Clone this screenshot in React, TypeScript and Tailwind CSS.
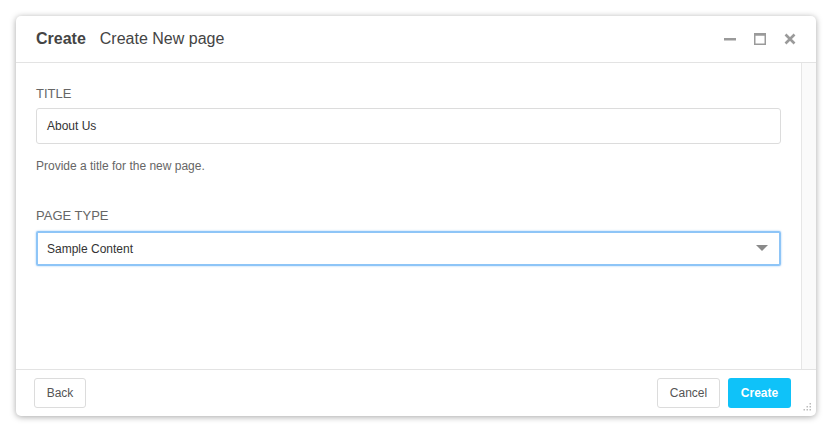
import React from 'react';

export default function App() {
  return (
    <div className="w-[830px] h-[430px] bg-white p-4 font-['Liberation_Sans',Arial,sans-serif]">
      <div className="w-[800px] h-[400px] bg-white rounded-[5px] shadow-[0_1px_6px_rgba(0,0,0,0.35)] flex flex-col overflow-hidden">
        {/* Header */}
        <div className="h-[47px] border-b border-[#e3e3e3] flex items-center pl-5 pr-5 shrink-0">
          <span className="text-[16px] font-bold text-[#444]">Create</span>
          <span className="text-[16px] text-[#444] ml-[14px]">Create New page</span>
          <div className="ml-auto flex items-center gap-[18px] pr-0">
            <svg width="12" height="12" viewBox="0 0 12 12">
              <rect x="0" y="5" width="12" height="2.5" fill="#9a9a9a" />
            </svg>
            <svg width="12" height="12" viewBox="0 0 12 12">
              <rect x="0.75" y="0.75" width="10.5" height="10.5" fill="none" stroke="#9a9a9a" strokeWidth="1.5" />
              <rect x="0.75" y="0.75" width="10.5" height="2" fill="#9a9a9a" />
            </svg>
            <svg width="12" height="12" viewBox="0 0 12 12">
              <path d="M1.5 1.5 L10.5 10.5 M10.5 1.5 L1.5 10.5" stroke="#9a9a9a" strokeWidth="2.6" />
            </svg>
          </div>
        </div>

        {/* Body */}
        <div className="flex-1 flex min-h-0">
          <div className="flex-1 pl-5 pr-5 pt-[23px]">
            <div className="text-[13px] leading-4 text-[#666] mb-[6px]">TITLE</div>
            <div className="h-[36px] border border-[#dcdcdc] rounded-[3px] flex items-center px-[10px] text-[12px] text-[#333]">
              About Us
            </div>
            <div className="text-[12px] leading-4 text-[#666] mt-[14px]">Provide a title for the new page.</div>
            <div className="text-[13px] leading-4 text-[#666] mt-[34px] mb-[7px]">PAGE TYPE</div>
            <div className="h-[35px] border-2 border-[#8ec5f7] rounded-[2px] shadow-[0_0_2px_rgba(80,160,240,0.6)] flex items-center px-[9px] text-[12px] text-[#333]">
              <span>Sample Content</span>
              <svg className="ml-auto mr-[2px]" width="12" height="7" viewBox="0 0 12 7">
                <path d="M0 0 L12 0 L6 6 Z" fill="#8a8a8a" />
              </svg>
            </div>
          </div>
          <div className="w-[15px] bg-[#fafafa] border-l border-[#e6e6e6] shrink-0" />
        </div>

        {/* Footer */}
        <div className="h-[47px] border-t border-[#e3e3e3] flex items-start pt-2 pl-[18px] pr-[25px] shrink-0 relative">
          <button className="h-[30px] w-[52px] border border-[#dcdcdc] rounded-[3px] bg-white text-[12px] text-[#555]">Back</button>
          <button className="ml-auto h-[30px] w-[63px] border border-[#dcdcdc] rounded-[3px] bg-white text-[12px] text-[#555]">Cancel</button>
          <button className="ml-2 h-[30px] w-[63px] rounded-[3px] bg-[#0fc2f9] text-[12px] font-bold text-white">Create</button>
          <svg className="absolute right-[4px] bottom-[4px]" width="10" height="10" viewBox="0 0 10 10">
            <rect x="7.5" y="1" width="1.5" height="1.5" fill="#bbb" />
            <rect x="4.5" y="4" width="1.5" height="1.5" fill="#bbb" />
            <rect x="7.5" y="4" width="1.5" height="1.5" fill="#bbb" />
            <rect x="1.5" y="7" width="1.5" height="1.5" fill="#bbb" />
            <rect x="4.5" y="7" width="1.5" height="1.5" fill="#bbb" />
            <rect x="7.5" y="7" width="1.5" height="1.5" fill="#bbb" />
          </svg>
        </div>
      </div>
    </div>
  );
}
